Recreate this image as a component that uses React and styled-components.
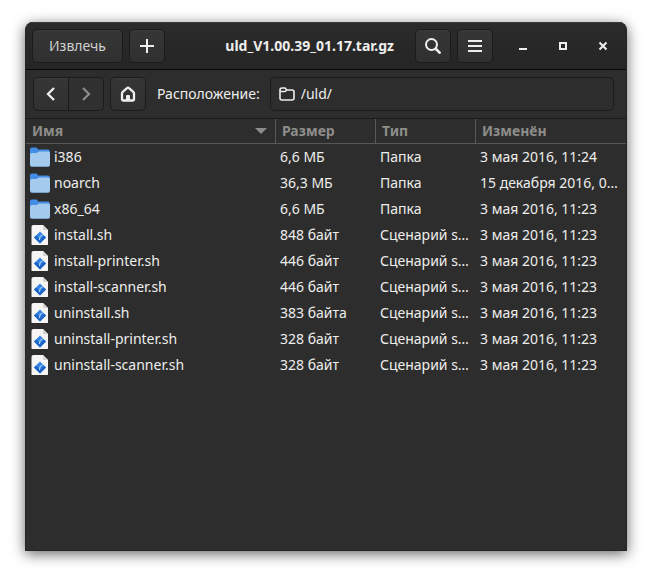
import React from "react";
import styled, { createGlobalStyle } from "styled-components";

const GlobalStyle = createGlobalStyle`
  *, *::before, *::after { box-sizing: border-box; }
  body {
    margin: 0;
    background: #fff;
    color: #eeeeec;
    font: 14px/20px "Noto Sans", sans-serif;
  }
  button, input { font: inherit; color: inherit; }
`;

const Desktop = styled.div`
  display: flex;
  min-height: 100vh;
  padding: 22px 25px 28px;
`;

const Window = styled.main`
  flex: 1;
  min-width: 0;
  display: flex;
  flex-direction: column;
  overflow: hidden;
  border: 1px solid #252525;
  border-top: 0;
  border-radius: 8px 8px 0 0;
  background: #2d2d2d;
  box-shadow: 0 3px 14px rgba(0, 0, 0, 0.6);
`;

const HeaderBar = styled.header`
  display: flex;
  align-items: center;
  gap: 6px;
  height: 48px;
  padding: 0 6px;
  border-bottom: 1px solid #070707;
  background: linear-gradient(#2b2b2b, #252525);
  box-shadow: inset 0 1px #3a3a3a;
`;

const Title = styled.h1`
  flex: 1;
  min-width: 0;
  margin: 0;
  padding-right: 15px;
  overflow: hidden;
  text-align: right;
  text-overflow: ellipsis;
  white-space: nowrap;
  font-size: 14px;
  font-weight: 700;
  line-height: 20px;
`;

const Button = styled.button`
  display: flex;
  align-items: center;
  justify-content: center;
  flex: none;
  width: ${(p) => (p.$wide ? "91px" : "36px")};
  height: 34px;
  padding: 0;
  border: 1px solid #1b1b1b;
  border-radius: 5px;
  background: linear-gradient(#363636, #303030);
  box-shadow: inset 0 1px #3b3b3b;
  color: ${(p) => (p.$muted ? "#d0d0ce" : "#eeeeec")};

  &:disabled { background: #303030; color: #8a8a88; box-shadow: none; }
`;

const WindowControl = styled.button`
  display: flex;
  align-items: center;
  justify-content: center;
  width: 34px;
  height: 34px;
  padding: 0;
  border: 0;
  background: none;
`;

const Controls = styled.div`
  display: flex;
  gap: 6px;
  margin-left: 7px;
`;

const LocationBar = styled.nav`
  display: flex;
  align-items: center;
  gap: 6px;
  height: 49px;
  padding: 0 12px 0 7px;
  border-bottom: 1px solid #1b1b1b;
`;

const Linked = styled.div`
  display: flex;

  ${Button}:first-child { border-radius: 5px 0 0 5px; }
  ${Button}:last-child { width: 35px; border-left: 0; border-radius: 0 5px 5px 0; }
`;

const LocationLabel = styled.label`
  margin: 0 4px 0 5px;
  white-space: nowrap;
`;

const Entry = styled.div`
  display: flex;
  flex: 1;
  align-items: center;
  gap: 6px;
  min-width: 0;
  height: 34px;
  padding: 0 8px;
  border: 1px solid #1b1b1b;
  border-radius: 5px;
`;

const PathInput = styled.input`
  flex: 1;
  min-width: 0;
  padding: 0;
  border: 0;
  outline: 0;
  background: none;
`;

const FileTable = styled.table`
  width: 100%;
  border-collapse: separate;
  border-spacing: 0;
  table-layout: fixed;
`;

const ColumnHead = styled.th`
  width: ${(p) => p.$width || "auto"};
  height: 25px;
  padding: 0 6px;
  border-right: 1px solid #585858;
  border-bottom: 1px solid #585858;
  color: #8d8d8b;
  text-align: left;

  &:last-child { border-right: 0; }
`;

const HeadContent = styled.div`
  display: flex;
  align-items: center;
  justify-content: space-between;
  padding-right: 2px;
`;

const Cell = styled.td`
  height: 26px;
  padding: 0 5px 0 4px;
  overflow: hidden;
  text-overflow: ellipsis;
  white-space: nowrap;
`;

const FileName = styled.div`
  display: flex;
  align-items: center;
  gap: 4px;
`;

const Icon = ({ children, size = 16 }) => (
  <svg width={size} height={size} viewBox={`0 0 ${size} ${size}`} fill="none" stroke="currentColor" strokeWidth="2" aria-hidden="true">
    {children}
  </svg>
);

const FolderIcon = () => (
  <Icon size={20}>
    <g stroke="none">
      <path d="M0 2.3Q0 .5 1.8.5H6q1 0 1.500 1L8 2.400h10q1.800 0 1.800 1.800V12H0z" fill="#438de6" />
      <path d="M0 8q0-2 2-2h4.500L9 4.400h9.200Q20 4.400 20 6v11.500q0 2-2 2H2q-2 0-2-2z" fill="#a4caee" />
      <path d="M0 17q0 2 2 2h16q2 0 2-2v.7q0 2-2 2H2q-2 0-2-2z" fill="#7fb0e3" />
    </g>
  </Icon>
);

const ScriptIcon = () => (
  <Icon size={20}>
    <g stroke="none">
      <path d="M1.500 2Q1.500 0 3.500 0H13l5 5v14q0 2-2 2H3.500q-2 0-2-2z" fill="#f6f5f4" />
      <path d="M13 0l5 5h-3.500q-1.500 0-1.500-1.500z" fill="#d5d3cf" />
      <path d="M10 6.500l6 6-6 6-6-6z" fill="#3584e4" />
      <path d="M4 12.500l6 6 6-6-2-2-4 4-4-4z" fill="#1c65c6" />
      <path d="M12.500 10L10 11.500l-.5 3.500" stroke="#c0dcfa" strokeWidth="1" />
    </g>
  </Icon>
);

const files = [
  ["folder", "i386", "6,6 МБ", "Папка", "3 мая 2016, 11:24"],
  ["folder", "noarch", "36,3 МБ", "Папка", "15 декабря 2016, 0…"],
  ["folder", "x86_64", "6,6 МБ", "Папка", "3 мая 2016, 11:23"],
  ["script", "install.sh", "848 байт", "Сценарий s…", "3 мая 2016, 11:23"],
  ["script", "install-printer.sh", "446 байт", "Сценарий s…", "3 мая 2016, 11:23"],
  ["script", "install-scanner.sh", "446 байт", "Сценарий s…", "3 мая 2016, 11:23"],
  ["script", "uninstall.sh", "383 байта", "Сценарий s…", "3 мая 2016, 11:23"],
  ["script", "uninstall-printer.sh", "328 байт", "Сценарий s…", "3 мая 2016, 11:23"],
  ["script", "uninstall-scanner.sh", "328 байт", "Сценарий s…", "3 мая 2016, 11:23"],
];

export default function App() {
  return (
    <Desktop>
      <GlobalStyle />
      <Window>
        <HeaderBar>
          <Button $wide $muted>Извлечь</Button>
          <Button aria-label="Добавить"><Icon><path d="M8 1v14M1 8h14" /></Icon></Button>
          <Title>uld_V1.00.39_01.17.tar.gz</Title>
          <Button aria-label="Поиск"><Icon><circle cx="6.500" cy="6.500" r="5.500" /><path d="M10.500 10.500l5 5" strokeWidth="2.500" /></Icon></Button>
          <Button aria-label="Меню"><Icon><path d="M1 3h14M1 8h14M1 13h14" /></Icon></Button>
          <Controls>
            <WindowControl aria-label="Свернуть"><Icon><path d="M4 11h8" /></Icon></WindowControl>
            <WindowControl aria-label="Развернуть"><Icon><path d="M5 5h6v6H5z" /></Icon></WindowControl>
            <WindowControl aria-label="Закрыть"><Icon><path d="M4.500 4.500l7 7M11.500 4.500l-7 7" /></Icon></WindowControl>
          </Controls>
        </HeaderBar>
        <LocationBar>
          <Linked>
            <Button aria-label="Назад"><Icon><path d="M11 2L5 8l6 6" strokeWidth="2.300" /></Icon></Button>
            <Button aria-label="Вперёд" disabled><Icon><path d="M5 2l6 6-6 6" strokeWidth="2.300" /></Icon></Button>
          </Linked>
          <Button aria-label="Домой">
            <Icon>
              <path d="M2 7.500Q2 6.500 3 5.600L7 2.200q1-.8 2 0l4 3.400q1 .9 1 1.900V13q0 1.500-1.500 1.500h-9Q2 14.500 2 13z" strokeWidth="2.300" />
              <path d="M6 14v-4q0-1 1-1h2q1 0 1 1v4z" fill="currentColor" stroke="none" />
            </Icon>
          </Button>
          <LocationLabel htmlFor="location">Расположение:</LocationLabel>
          <Entry>
            <Icon>
              <path d="M1 4q0-2 2-2h2.500q1 0 1.500 1l.5 1H13q2 0 2 2v6q0 2-2 2H3q-2 0-2-2zM1 5.500h4.500q1.500 0 2-1.500" strokeWidth="1.600" />
            </Icon>
            <PathInput id="location" defaultValue="/uld/" />
          </Entry>
        </LocationBar>
        <FileTable>
          <thead>
            <tr>
              <ColumnHead $width="250px" scope="col" aria-sort="ascending">
                <HeadContent>
                  Имя
                  <svg width="12" height="6" viewBox="0 0 12 6" aria-hidden="true"><path d="M0 0h12L6 6z" fill="#8d8d8b" /></svg>
                </HeadContent>
              </ColumnHead>
              <ColumnHead $width="100px" scope="col">Размер</ColumnHead>
              <ColumnHead $width="100px" scope="col">Тип</ColumnHead>
              <ColumnHead scope="col">Изменён</ColumnHead>
            </tr>
          </thead>
          <tbody>
            {files.map(([kind, name, size, type, modified]) => (
              <tr key={name}>
                <Cell><FileName>{kind === "folder" ? <FolderIcon /> : <ScriptIcon />}{name}</FileName></Cell>
                <Cell>{size}</Cell>
                <Cell>{type}</Cell>
                <Cell>{modified}</Cell>
              </tr>
            ))}
          </tbody>
        </FileTable>
      </Window>
    </Desktop>
  );
}
